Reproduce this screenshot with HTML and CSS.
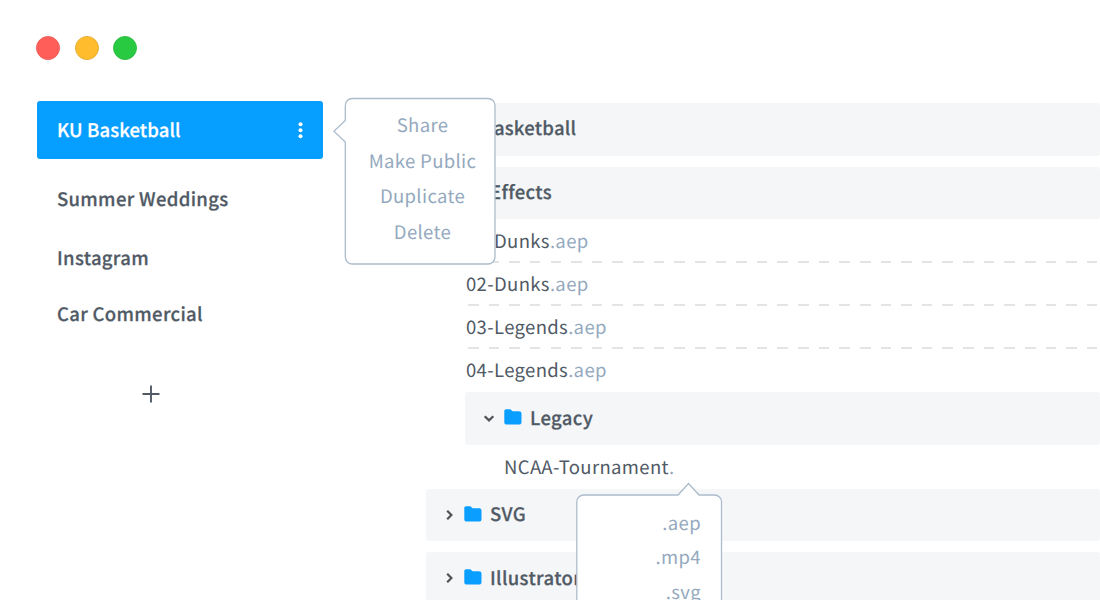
FILE: index.html
```html
<!DOCTYPE html>
<html lang="en">
<head>
<meta charset="utf-8">
<title>Projects</title>
<link rel="stylesheet" href="styles.css">
</head>
<body>
<svg class="defs" width="0" height="0" aria-hidden="true">
  <symbol id="folder" viewBox="0 0 18 16"><path fill="#099eff" d="M2.200.3h3.400c1 0 1.500.3 1.900 1 .3.600.6.900 1.400.9h5.900c1.800 0 2.700.8 2.700 2.500v8.200c0 1.800-.9 2.700-2.700 2.700H3C1.200 15.600.3 14.700.3 12.900V2.200C.3 1 1 .3 2.200.3z"/></symbol>
  <symbol id="chevron" viewBox="0 0 12 12"><path d="M4.200 1.700 8.400 6 4.200 10.300" fill="none" stroke="#505356" stroke-width="2.200"/></symbol>
</svg>
<div class="window">
  <aside class="sidebar">
    <div class="controls"><i class="dot red"></i><i class="dot yellow"></i><i class="dot green"></i></div>
    <nav class="projects">
      <div class="project active"><span class="tight">KU Basketball</span>
        <svg class="more" width="6" height="18" viewBox="0 0 6 18"><circle cx="3.500" cy="3.300" r="2" fill="#fff"/><circle cx="3.500" cy="9.300" r="2" fill="#fff"/><circle cx="3.500" cy="15.300" r="2" fill="#fff"/></svg>
      </div>
      <div class="project p2"><span>Summer Weddings</span></div>
      <div class="project p3"><span>Instagram</span></div>
      <div class="project p4"><span>Car Commercial</span></div>
    </nav>
    <svg class="add" width="18" height="18" viewBox="0 0 18 18"><path d="M9 1.200v15.600M1.200 9h15.600" stroke="#505a65" stroke-width="1.900" stroke-linecap="round"/></svg>
  </aside>
  <main class="tree">
    <div class="folder root"><svg class="chev open"><use href="#chevron"/></svg><svg class="fold"><use href="#folder"/></svg><span class="tight">KU Basketball</span></div>
    <div class="folder sub"><svg class="chev open"><use href="#chevron"/></svg><svg class="fold"><use href="#folder"/></svg><span>Effects</span></div>
    <div class="files">
      <div class="file">01-Dunks<span class="ext">.aep</span></div>
      <div class="file">02-Dunks<span class="ext">.aep</span></div>
      <div class="file">03-Legends<span class="ext">.aep</span></div>
      <div class="file last">04-Legends<span class="ext">.aep</span></div>
    </div>
    <div class="folder nested"><svg class="chev open"><use href="#chevron"/></svg><svg class="fold"><use href="#folder"/></svg><span>Legacy</span></div>
    <div class="file deep">NCAA-Tournament<span class="ext">.</span></div>
    <div class="folder sub"><svg class="chev"><use href="#chevron"/></svg><svg class="fold"><use href="#folder"/></svg><span>SVG</span></div>
    <div class="folder sub"><svg class="chev"><use href="#chevron"/></svg><svg class="fold"><use href="#folder"/></svg><span>Illustrator</span></div>
  </main>
  <div class="menu actions">
    <svg class="outline" width="164" height="168" viewBox="0 0 164 168"><path d="M19.300 1.500H155a7 7 0 0 1 7 7V160a7 7 0 0 1-7 7H19.300a7 7 0 0 1-7-7V45L.9 34.200 12.300 23.500V8.500a7 7 0 0 1 7-7z" fill="#fff" stroke="#acbccc" stroke-width="1.300"/></svg>
    <span>Share</span><span>Make Public</span><span>Duplicate</span><span>Delete</span>
  </div>
  <div class="menu formats">
    <svg class="outline" width="148" height="130" viewBox="0 0 148 130"><path d="M1.800 140V20a7 7 0 0 1 7-7H103L113.500 1.500 124 13H139.500a7 7 0 0 1 7 7V140" fill="#fff" stroke="#acbccc" stroke-width="1.300"/></svg>
    <span>.aep</span><span>.mp4</span><span>.svg</span>
  </div>
</div>
</body>
</html>
```
FILE: styles.css
```css
* { box-sizing: border-box; }
body { margin: 0; background: #fff; }
.defs { position: absolute; }
.window {
  position: relative;
  display: flex;
  width: 1100px;
  height: 600px;
  overflow: hidden;
  font-family: "Noto Sans CJK SC", "Noto Sans", sans-serif;
  font-size: 18.500px;
  letter-spacing: 0.35px;
  text-rendering: geometricPrecision;
  color: #505a65;
  white-space: nowrap;
}
.sidebar { width: 387px; flex: none; padding: 36px 0 0 37px; }
.controls { display: flex; gap: 14.500px; height: 65px; margin-left: -1px; }
.dot { width: 24px; height: 24px; border-radius: 50%; border: 1px solid; }
.red { background: #ff5f58; border-color: #f0605a; }
.yellow { background: #ffbd2e; border-color: #e8ae3a; }
.green { background: #28ca42; border-color: #35bd48; }
.projects { display: flex; flex-direction: column; }
.project { display: flex; align-items: center; width: 286px; height: 58px; padding: 0 20px; font-weight: 500; }
.project span, .folder span { -webkit-text-stroke: 0.25px currentColor; }
.project span { letter-spacing: 0.32px; }
.project .tight { letter-spacing: 0.1px; }
.project.active { justify-content: space-between; background: #069eff; color: #fff; border-radius: 3px; }
.p2 { margin-top: 11px; }
.p3 { margin-top: 1px; }
.p4 { margin-top: -2px; }
.add { display: block; margin: 42px 0 0 105px; }
.tree { flex: 1; padding-top: 103px; }
.folder {
  display: flex;
  align-items: center;
  height: 52.500px;
  margin-bottom: 11px;
  background: #f5f6f8;
  border-radius: 3px;
  padding-left: 17px;
  font-weight: 500;
}
.folder span { padding-bottom: 1.500px; }
.folder.root span { padding-bottom: 3px; letter-spacing: 0.22px; }
.sub { margin-left: 39px; }
.nested { margin: 0 0 0 78px; padding-left: 18px; }
.chev { width: 12px; height: 12px; margin-right: 9px; }
.open { transform: rotate(90deg); }
.fold { width: 18px; height: 16px; margin: 0 8px 2px 0; }
.files { margin: -10px 0 0 79px; }
.file { height: 43px; line-height: 43px; }
.files .file {
  background: repeating-linear-gradient(90deg, #e3e4e4 0 10.600px, transparent 10.600px 20.630px) 1.700px 100% / 100% 2px no-repeat;
}
.files .last { background: none; }
.deep { height: 44px; line-height: 45px; margin-left: 117px; }
.ext { color: #94a9be; }
.menu { position: absolute; display: flex; flex-direction: column; color: #94a9be; }
.menu span { position: relative; }
.outline { position: absolute; left: 0; top: 0; }
.actions { left: 333px; top: 97px; width: 164px; height: 168px; padding: 11px 0 0 15px; text-align: center; line-height: 35.700px; }
.formats { left: 575px; top: 482px; width: 148px; height: 130px; padding: 24px 22px 0 0; text-align: right; line-height: 34.300px; }
```
